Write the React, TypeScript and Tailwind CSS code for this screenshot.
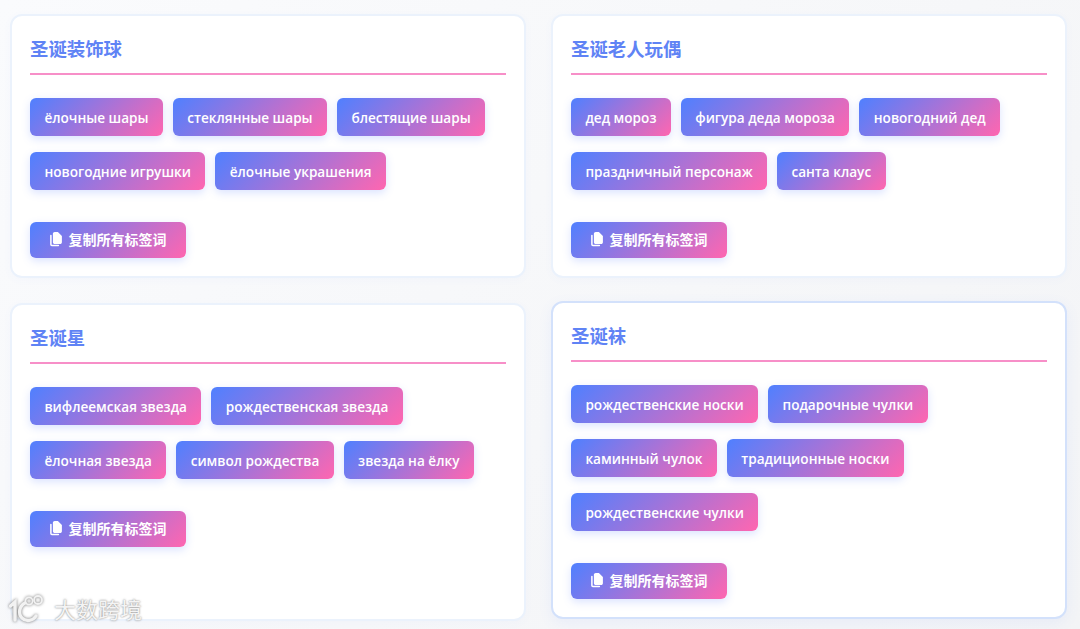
import React from 'react';

const groups = [
  { title: '圣诞装饰球', tags: ['ёлочные шары', 'стеклянные шары', 'блестящие шары', 'новогодние игрушки', 'ёлочные украшения'] },
  { title: '圣诞老人玩偶', tags: ['дед мороз', 'фигура деда мороза', 'новогодний дед', 'праздничный персонаж', 'санта клаус'] },
  { title: '圣诞星', tags: ['вифлеемская звезда', 'рождественская звезда', 'ёлочная звезда', 'символ рождества', 'звезда на ёлку'] },
  { title: '圣诞袜', tags: ['рождественские носки', 'подарочные чулки', 'каминный чулок', 'традиционные носки', 'рождественские чулки'], active: true },
];

function CopyIcon() {
  return (
    <svg width="12" height="15" viewBox="1.2 0 11.8 15" fill="currentColor">
      <path d="M4 1.8C4 .8 4.8 0 5.8 0H9l4 4v6.2c0 1-.8 1.8-1.8 1.8H5.8C4.8 12 4 11.2 4 10.2V1.8z" />
      <path d="M2 3.5v9c0 .6.4 1 1 1h6.5" fill="none" stroke="currentColor" strokeWidth="1.5" strokeLinecap="round" />
    </svg>
  );
}

function Card({ title, tags, active }: { title: string; tags: string[]; active?: boolean }) {
  return (
    <div
      className={
        active
          ? 'bg-white rounded-xl border-2 border-[#d3e1fb] px-[18px] pt-[16px] pb-[18px] -translate-y-0.5 shadow-[0_4px_14px_rgba(91,127,255,0.08)]'
          : 'bg-white rounded-xl border-2 border-[#ebf2fc] px-[18px] pt-[16px] pb-[18px] shadow-[0_2px_10px_rgba(91,127,255,0.03)]'
      }
    >
      <h2 className="text-[18.4px] leading-[34px] font-semibold text-[#5f83f5] pb-[7px] border-b-2 border-[#f78fc8] mb-[23px]">{title}</h2>
      <div className="flex flex-wrap gap-x-[10px] gap-y-[16px] mb-[32px]">
        {tags.map((tag) => (
          <span
            key={tag}
            className="h-[38px] px-[14.4px] pt-[2px] flex items-center rounded-md text-[13.6px] font-semibold text-white bg-[linear-gradient(135deg,#4f80ff,#ff66b0)] shadow-[0_3px_8px_rgba(91,127,255,0.22)]"
          >
            {tag}
          </span>
        ))}
      </div>
      <button className="h-[36px] w-[156px] pb-px flex items-center justify-center gap-[7px] rounded-md text-[14px] font-semibold text-white bg-[linear-gradient(135deg,#4f80ff,#ff66b0)] shadow-[0_3px_8px_rgba(91,127,255,0.22)]">
        <CopyIcon />
        复制所有标签词
      </button>
    </div>
  );
}

export default function App() {
  return (
    <div className="relative w-[1080px] h-[629px] overflow-hidden bg-[linear-gradient(135deg,#fafbfd,#f3f4f6)] font-['Open_Sans','Noto_Sans_CJK_SC',sans-serif]">
      <div className="grid grid-cols-[516px_516px] gap-[25px] pl-[10px] pt-[14px]">
        {groups.map((g) => (
          <Card key={g.title} title={g.title} tags={g.tags} active={g.active} />
        ))}
      </div>

      {/* watermark over the bottom left corner */}
      <div className="absolute left-[9px] top-[594px] flex items-center gap-[5px]">
        <svg width="40" height="30" viewBox="0 0 40 30" fill="none" stroke="#f2f2f2" strokeWidth="3.4" strokeLinecap="round" className="drop-shadow-[0_0_1.5px_rgba(80,80,80,0.8)]">
          <path d="M1.5 12 L6 8 V26" />
          <path d="M16 9 C10 12 9 20 13 24 C17 28 24 27 27 22" />
          <circle cx="20" cy="7" r="3.6" strokeWidth="1.8" />
          <circle cx="29" cy="6" r="4" strokeWidth="1.8" />
        </svg>
        <span className="text-[22px] leading-[28px] font-normal text-[#f4f4f4] [text-shadow:0_0_2px_rgba(80,80,80,0.8)]">大数跨境</span>
      </div>
    </div>
  );
}
